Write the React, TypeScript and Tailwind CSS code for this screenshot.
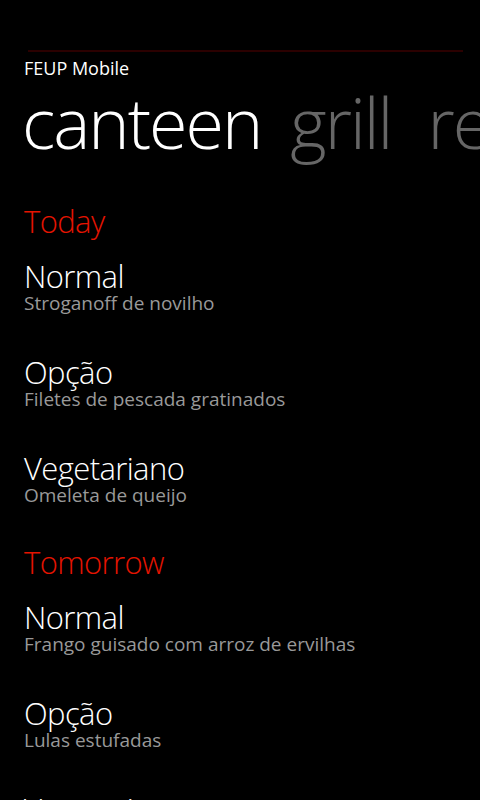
const MENU = [
  {
    day: "Today",
    items: [
      { title: "Normal", dish: "Stroganoff de novilho" },
      { title: "Opção", dish: "Filetes de pescada gratinados" },
      { title: "Vegetariano", dish: "Omeleta de queijo" },
    ],
  },
  {
    day: "Tomorrow",
    items: [
      { title: "Normal", dish: "Frango guisado com arroz de ervilhas" },
      { title: "Opção", dish: "Lulas estufadas" },
      { title: "Vegetariano", dish: "" },
    ],
  },
];

export default function App() {
  return (
    <div className="h-[800px] w-[480px] overflow-hidden bg-black font-['Open_Sans',sans-serif] text-white">
      <div className="ml-[28px] mr-[17px] mt-[50px] h-[2px] bg-[#2b0000]" />
      <div className="ml-[24px] mt-[7px] text-[18px] leading-[18px]">FEUP Mobile</div>

      <div className="mt-[9px] flex whitespace-nowrap pl-[22px] text-[70px] font-light leading-[72px] tracking-[-2px]">
        <span>canteen</span>
        <span className="ml-[29px] text-[#666666]">grill</span>
        <span className="ml-[36px] text-[#666666]">restaurant</span>
      </div>

      <div className="mt-[47px] pl-[24px]">
        {MENU.map((section, i) => (
          <section key={section.day} className={i > 0 ? "mt-[40px]" : ""}>
            <h2 className="text-[31px] font-light leading-[32px] tracking-[-0.6px] text-[#e51400]">
              {section.day}
            </h2>
            <ul className="mt-[23px] flex flex-col gap-[42px]">
              {section.items.map((item) => (
                <li key={item.title}>
                  <p className="text-[31px] font-light leading-[32px] tracking-[-0.6px]">{item.title}</p>
                  {item.dish && (
                    <p className="text-[19px] leading-[22px] text-[#999999]">{item.dish}</p>
                  )}
                </li>
              ))}
            </ul>
          </section>
        ))}
      </div>
    </div>
  );
}
